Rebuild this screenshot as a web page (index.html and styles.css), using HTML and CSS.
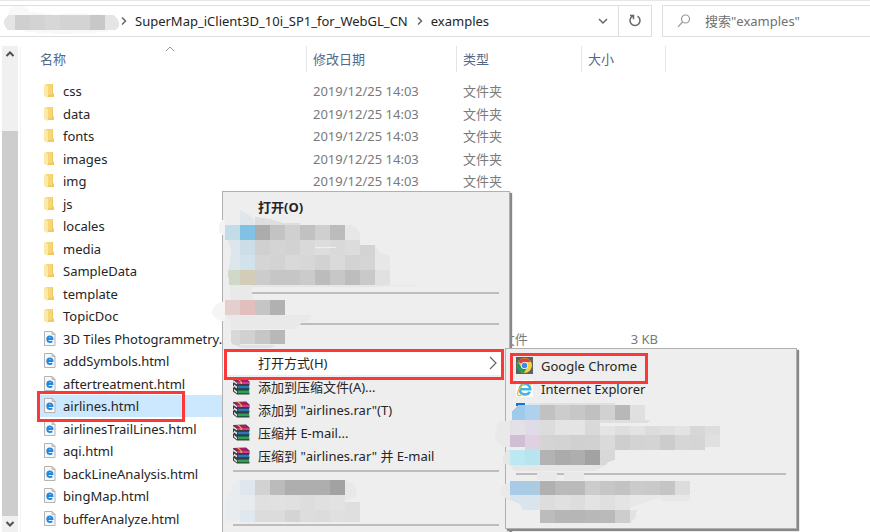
FILE: index.html
```html
<!DOCTYPE html>
<html lang="zh-CN">
<head>
<meta charset="utf-8">
<title>examples</title>
<link rel="stylesheet" href="styles.css">
</head>
<body>
<svg class="defs" aria-hidden="true">
  <defs>
    <symbol id="folder" viewBox="0 0 13 15">
      <path fill="#f0c95f" d="M3 1h7v9l1 1v3H3z"/>
      <path fill="#f6d778" d="M3 1h6v11H3z"/>
      <path fill="#fbe9a9" d="M1 1l4 2v12l-4-2z"/>
    </symbol>
    <symbol id="page" viewBox="0 0 13 15">
      <path fill="#f7f7f7" stroke="#b4b4b4" d="M1.500.5h7.500l3 3v11h-10.500z"/>
      <path fill="#ddd" stroke="#a8a8a8" stroke-width=".7" d="M9 .5v3h3z"/>
      <path fill="none" stroke="#2388e0" stroke-width="1.900" d="M4 8h5.500c0-3.400-5.300-3.400-5.300.3 0 3 3.500 3.200 5 2"/>
    </symbol>
    <symbol id="rar" viewBox="0 0 17 17">
      <path fill="#3a3a3a" d="M0 1l13-.5 3.500 3V7l-.5 1 .5 3-.5 1 .5 4.500H4L0 13.500V10l1-1-1-1.500V5l1-1z"/>
      <path fill="#a81c62" d="M1 1h12l3 3H4z"/>
      <path fill="#d93a8e" d="M4 4h12v2H4.500z"/>
      <path fill="#e8e8e8" d="M1 2.500L4 5v1.500L1 4.500zM1 6.500l3 2v2l-3-2zM1 11l3 2.500v2l-3-2.500z"/>
      <path fill="#1c4f9c" d="M4.500 7.500H16v3H4.500z"/>
      <path fill="#38a4d8" d="M5 8.500h11v1H5z"/>
      <path fill="#137a3c" d="M4.500 12H16v3.500H4.500z"/>
      <path fill="#50c47b" d="M5 13.500h11v1H5z"/>
      <path fill="#d8b637" d="M4 1h2l3 3v2H7.500V4z"/>
    </symbol>
    <symbol id="chrome" viewBox="0 0 17 17">
      <path fill="#5b6165" d="M0 0h17v17H0z"/>
      <circle cx="8.500" cy="8.500" r="7.500" fill="#f9cf3c"/>
      <path fill="#dc4437" d="M8.500 8.500L2 4.800A7.500 7.500 0 0 1 15 5H8.500z"/>
      <path fill="#1d9d58" d="M2 4.800A7.500 7.500 0 0 0 7.800 16L11.500 10.300l-6 .2z"/>
      <circle cx="8.500" cy="8.500" r="3.600" fill="#fff"/>
      <circle cx="8.500" cy="8.500" r="2.800" fill="#4386f5"/>
    </symbol>
    <symbol id="ie" viewBox="0 0 17 17">
      <path fill="#fff" d="M0 0h17v17H0z"/>
      <path fill="none" stroke="#42b4e6" stroke-width="2.600" d="M4.500 9.300h9.700c0-7-10.300-7-10.300.2 0 6 8 6.300 9.700 2.200"/>
      <path fill="none" stroke="#f2bd2c" stroke-width="1.400" d="M14.500 4.800C17 .2 12 1 8 3.800 3 7.500.3 13.500 2.200 15.200c1 .8 2.800 0 4-1"/>
    </symbol>
  </defs>
</svg>

<div class="window">
  <header class="toolbar">
    <div class="address">
      <svg class="mosaic crumb-mosaic" viewBox="0 0 119 30" data-mosaic="crumb"></svg>
      <svg class="chevron" viewBox="0 0 6 8"><path d="M1 0.500l3.500 3.500L1 7.500"/></svg>
      <a href="#">SuperMap_iClient3D_10i_SP1_for_WebGL_CN</a>
      <svg class="chevron" viewBox="0 0 6 8"><path d="M1 0.500l3.500 3.500L1 7.500"/></svg>
      <a href="#">examples</a>
      <button class="history" aria-label="历史"><svg viewBox="0 0 10 7"><path d="M1 1l4 4 4-4"/></svg></button>
      <button class="refresh" aria-label="刷新"><svg viewBox="0 0 14 14"><path d="M9.500 2.200a5 5 0 1 1-5 0M2 1.500h3.500v3.800"/></svg></button>
    </div>
    <label class="search">
      <svg viewBox="0 0 14 14"><circle cx="8.500" cy="5" r="4"/><path d="M5.500 8L1 12.800"/></svg>
      <input type="search" placeholder="搜索&quot;examples&quot;" aria-label="搜索">
    </label>
  </header>

  <main class="content">
    <div class="rail"></div>
    <div class="scrollbar">
      <svg viewBox="0 0 16 16"><path d="M4.500 10L8 6.500l3.500 3.500"/></svg>
      <div class="thumb"></div>
      <svg viewBox="0 0 16 16"><path d="M4.500 6L8 9.500 11.500 6"/></svg>
    </div>
    <section class="pane">
      <table>
        <colgroup><col class="c-name"><col class="c-date"><col class="c-type"><col class="c-size"></colgroup>
        <thead><tr><th>名称<svg class="sort" viewBox="0 0 10 6"><path d="M1 5l4-4 4 4"/></svg></th><th>修改日期</th><th>类型</th><th>大小</th></tr></thead>
        <tbody>
          <tr><td><svg><use href="#folder"/></svg>css</td><td>2019/12/25 14:03</td><td>文件夹</td><td></td></tr>
          <tr><td><svg><use href="#folder"/></svg>data</td><td>2019/12/25 14:03</td><td>文件夹</td><td></td></tr>
          <tr><td><svg><use href="#folder"/></svg>fonts</td><td>2019/12/25 14:03</td><td>文件夹</td><td></td></tr>
          <tr><td><svg><use href="#folder"/></svg>images</td><td>2019/12/25 14:03</td><td>文件夹</td><td></td></tr>
          <tr><td><svg><use href="#folder"/></svg>img</td><td>2019/12/25 14:03</td><td>文件夹</td><td></td></tr>
          <tr><td><svg><use href="#folder"/></svg>js</td><td></td><td></td><td></td></tr>
          <tr><td><svg><use href="#folder"/></svg>locales</td><td></td><td></td><td></td></tr>
          <tr><td><svg><use href="#folder"/></svg>media</td><td></td><td></td><td></td></tr>
          <tr><td><svg><use href="#folder"/></svg>SampleData</td><td></td><td></td><td></td></tr>
          <tr><td><svg><use href="#folder"/></svg>template</td><td></td><td></td><td></td></tr>
          <tr><td><svg><use href="#folder"/></svg>TopicDoc</td><td></td><td></td><td></td></tr>
          <tr><td><svg><use href="#page"/></svg>3D Tiles Photogrammetry.</td><td></td><td>HTML 文件</td><td>3 KB</td></tr>
          <tr><td><svg><use href="#page"/></svg>addSymbols.html</td><td></td><td></td><td></td></tr>
          <tr><td><svg><use href="#page"/></svg>aftertreatment.html</td><td></td><td></td><td></td></tr>
          <tr class="selected"><td><svg><use href="#page"/></svg>airlines.html<span class="mark mark-file"></span></td><td></td><td></td><td></td></tr>
          <tr><td><svg><use href="#page"/></svg>airlinesTrailLines.html</td><td></td><td></td><td></td></tr>
          <tr><td><svg><use href="#page"/></svg>aqi.html</td><td></td><td></td><td></td></tr>
          <tr><td><svg><use href="#page"/></svg>backLineAnalysis.html</td><td></td><td></td><td></td></tr>
          <tr><td><svg><use href="#page"/></svg>bingMap.html</td><td></td><td></td><td></td></tr>
          <tr><td><svg><use href="#page"/></svg>bufferAnalyze.html</td><td></td><td></td><td></td></tr>
        </tbody>
      </table>
    </section>
  </main>

  <div class="menu context">
    <button class="default">打开(O)</button>
    <svg class="mosaic" viewBox="223 222 286 70" height="70" data-mosaic="apps"></svg>
    <hr>
    <svg class="mosaic" viewBox="223 294 286 29" height="29" data-mosaic="single"></svg>
    <hr>
    <svg class="mosaic" viewBox="223 325 286 26" height="26" data-mosaic="short"></svg>
    <button class="open-with">打开方式(H)<svg class="arrow" viewBox="0 0 8 14"><path d="M1 1l6 6-6 6"/></svg><span class="mark mark-open"></span></button>
    <button><svg><use href="#rar"/></svg>添加到压缩文件(A)...</button>
    <button><svg><use href="#rar"/></svg>添加到 "airlines.rar"(T)</button>
    <button><svg><use href="#rar"/></svg>压缩并 E-mail...</button>
    <button><svg><use href="#rar"/></svg>压缩到 "airlines.rar" 并 E-mail</button>
    <hr class="spaced">
    <svg class="mosaic" viewBox="223 472 286 52" height="52" data-mosaic="tail"></svg>
    <hr>
    <div class="menu-end"></div>
  </div>

  <div class="menu submenu">
    <button><svg><use href="#chrome"/></svg>Google Chrome<span class="mark mark-chrome"></span></button>
    <button><svg><use href="#ie"/></svg>Internet Explorer</button>
    <svg class="mosaic" viewBox="506 400 290 73" height="73" data-mosaic="browsers"></svg>
    <hr>
    <svg class="mosaic" viewBox="506 475 290 53" height="53" data-mosaic="more"></svg>
  </div>
</div>
<script src="mosaic.js"></script>
</body>
</html>
```
FILE: styles.css
```css
* { box-sizing: border-box; }

body {
  margin: 0;
  background: #fff;
  color: #252525;
  font: 13px/20px "Noto Sans", "Noto Sans CJK SC", sans-serif;
}

button, input { font: inherit; color: inherit; border: 0; background: none; padding: 0; }
a { color: inherit; text-decoration: none; }
svg { display: block; flex: none; }
.defs { position: absolute; width: 0; height: 0; }

.window {
  position: relative;
  display: flex;
  flex-direction: column;
  height: 100vh;
  overflow: hidden;
  border-top: 1px solid #e6e6e6;
}

.toolbar { display: flex; gap: 10px; padding-top: 4px; }
.address {
  display: flex;
  align-items: center;
  flex: 1;
  height: 32px;
  border: 1px solid #dedede;
  border-left: 0;
}
.crumb-mosaic { width: 119px; height: 30px; }
.chevron { width: 6px; height: 8px; margin: 0 8px 0 2px; }
.address a + .chevron { margin-left: 9px; }
.chevron path, .history path, .refresh path, .scrollbar path, .sort path, .arrow path { fill: none; stroke: #666; stroke-width: 1.5; }
.history { margin-left: auto; width: 30px; height: 30px; display: grid; place-items: center; }
.history svg { width: 10px; height: 7px; }
.refresh { width: 33px; height: 30px; display: grid; place-items: center; border-left: 1px solid #dedede; }
.refresh svg { width: 14px; height: 14px; }
.search {
  display: flex;
  align-items: center;
  gap: 14px;
  flex: 0 0 208px;
  min-width: 0;
  height: 32px;
  padding-left: 14px;
  border: 1px solid #dedede;
  border-right: 0;
}
.search svg { width: 14px; height: 14px; fill: none; stroke: #999; stroke-width: 1.2; }
.search input { flex: 1; min-width: 0; outline: 0; }
.search input::placeholder { color: #707070; opacity: 1; }

.content { flex: 1; display: flex; min-height: 0; padding-top: 9px; }
.rail { width: 2px; }
.scrollbar { width: 16px; background: #f0f0f0; display: flex; flex-direction: column; }
.scrollbar svg { width: 16px; height: 16px; }
.scrollbar path { stroke: #505050; stroke-width: 2; }
.thumb { flex: 1; margin-top: 69px; background: #cdcdcd; }

.pane { flex: 1; min-width: 0; margin-left: 2px; border-left: 1px solid #f2f2f2; padding-left: 19px; }
table { table-layout: fixed; width: 626px; border-collapse: separate; border-spacing: 0; }
.c-name { width: 267px; }
.c-date { width: 150px; }
.c-type { width: 125px; }
.c-size { width: 84px; }
th {
  position: relative;
  height: 26px;
  padding: 0 6px;
  border-right: 1px solid #e5e5e5;
  text-align: left;
  font-weight: 400;
  color: #52698a;
}
th:first-child { padding-left: 0; }
thead::after { content: ""; display: block; height: 8px; }
.sort { position: absolute; left: 125px; top: 0; width: 10px; height: 6px; }
.sort path { stroke: #999; stroke-width: 1; }
td { height: 22px; padding: 0 6px; color: #7a7a7a; white-space: nowrap; line-height: 22px; }
tr:nth-child(even) td { height: 23px; }
td:first-child { position: relative; padding: 0 0 0 3px; color: #252525; }
td:last-child { text-align: right; padding-right: 8px; }
td svg { display: inline-block; width: 13px; height: 15px; margin-right: 7px; vertical-align: -2px; }
.selected td { background: #cce8ff; }

.menu {
  position: absolute;
  display: flex;
  flex-direction: column;
  background: #eee;
  border: 1px solid #b0b0b0;
  box-shadow: 2px 2px 1px #888;
}
.context { left: 222px; top: 190px; width: 288px; }
.submenu { left: 505px; top: 347px; width: 292px; padding-top: 5px; }
.menu button {
  position: relative;
  display: flex;
  align-items: center;
  gap: 8px;
  height: 23px;
  padding: 0 10px;
  text-align: left;
}
.menu button svg { width: 17px; height: 17px; }
.menu .default { height: 30px; padding-left: 35px; font-weight: 700; }
.menu .open-with { height: 24px; padding-left: 35px; margin: 0 8px 0 0; background: #fff; }
.menu .open-with .arrow { width: 8px; height: 14px; margin-left: auto; margin-right: -6px; }
.arrow path { stroke-width: 1.2; }
.menu hr { height: 2px; margin: 0 10px; border: 0; background: #bdbdbd; }
.menu .spaced { margin-top: 3px; }
.menu-end { height: 20px; }
.mosaic { position: relative; overflow: visible; }
.menu .mosaic { width: 100%; }

.mark { position: absolute; z-index: 2; border: 3px solid #fb3838; }
.mark-file { left: -3px; top: -4px; width: 148px; height: 31px; }
.mark-open { left: 1px; top: -2px; width: 280px; height: 31px; }
.mark-chrome { left: 4px; top: -1px; width: 138px; height: 31px; }
```
FILE: mosaic.js
```js
// Each row: [x, y, height, colours]; tiles are 15px wide. Blobs are smudges drawn below the tiles.
const MOSAICS = {
  crumb: {
    blobs: [['#f8f8f8', 'M8 10Q8 0 18 0Q27 0 30 6L58 9Q64 6 80 7L108 9V26L60 28L26 26Z'],
            ['#e5e5e5', 'M15 9H8Q0 17 8 24H15Z'], ['#e5e5e5', 'M104 9H113Q124 17 116 24H104Z']],
    rows: [[15, 9, 15, 'cfcfcf d3d3d3 d7d7d7 d3d3d3 d3d3d3 c8c8c8']]
  },
  apps: {
    blobs: [['#f3f3f3', 'M225 219Q219 221 219 228Q219 235 225 236Z'],
            ['#dfe7ea', 'M240 210Q247 213 253 218L255 225H240Z'],
            ['#dedede', 'M255 217L270 219L284 223H300V225H255Z'],
            ['#e7e7e7', 'M345 225H351Q360 228 360 236L359 244H345Z'],
            ['#e7e7e7', 'M375 246L380 253L390 256V270H375ZM240 285H415L416 286L350 287H240Z'],
            ['#e9e9e9', 'M230 285H252L251 294L253 300H230Z']],
    rows: [[225, 225, 15, 'c3dce9 81c1e3 acacac c3c3c3 d0d0d0 c1c1c1 cfcfcf bcbcbc'],
           [240, 240, 15, 'ccdde8 d0d0d0 d4d4d4 d2d2d2 d9d9d9 dddddd d9d9d9 dcdcdc'],
           [360, 245, 10, 'd3d3d3'],
           [240, 255, 15, 'd2e2ea d5d5d5 d3d3d3 d9d9d9 d7d7d7 d2d2d2 dadada d3d3d3 d5d5d5'],
           [240, 270, 15, 'd3ccb8 cccccc c6c6c6 c6c6c6 cbcbcb bcbcbc c7c7c7 bdbdbd c9c9c9 e1e1e1']],
    over: [['#dce6ec', 'M228 240H240V270H229L231 250Z'], ['#d0d8c8', 'M228 270H240V285H229Z'],
           ['#efefef', 'M314 247L336 247V248H319V249Z']]
  },
  single: {
    blobs: [['#f5f5f5', 'M225 301Q212 304 212 312Q213 320 225 321Z'],
            ['#e9e9e9', 'M231 291H252L253 300H231ZM225 315H313L309 321L301 323L296 329H231V321Z']],
    rows: [[225, 300, 15, 'e5cece e1bfbf c5c5c5 b1b1b1']]
  },
  short: {
    blobs: [['#e9e9e9', 'M231 323H300L296 329H231Z'], ['#d8d8d8', 'M231 330H240V345H234Q231 344 231 340Z']],
    rows: [[240, 330, 14, 'd1d1d1 c6c6c6 b8b8b8']],
    over: [['#e1e1e1', 'M235 345H276L270 348H242Z']]
  },
  tail: {
    blobs: [['#e8ecee', 'M240 479Q231 483 232 490L225 501V521H240Z'],
            ['#e8e8e8', 'M345 480Q358 485 357 493Q355 500 345 500Z']],
    rows: [[240, 480, 15, 'dfe6ee d2d2d2 bbbbbb aeaeae aeaeae aeaeae a2a2a2'],
           [240, 495, 15, 'e7ebee e0e0e0 e1e1e1 e0e0e0 dddddd e0e0e0 e2e2e2'],
           [345, 502, 8, 'dfdfdf'],
           [240, 510, 12, 'dfe8ef dcdcdc dcdcdc d4d4d4 dddddd dcdcdc e0e0e0 dfdfdf']]
  },
  browsers: {
    blobs: [['#1376d3', 'M516 403H525V406H516Z'],
            ['#e9e9e9', 'M498 421H510V447H503Q495 443 495 434Z'],
            ['#e6e6e6', 'M510 450Q503 450 503 459Q503 465 510 465L514 471H595L607 465L600 460H510Z'],
            ['#dfdfdf', 'M540 403H615V405H540ZM600 420H651L647 423H600Z'],
            ['#9ecaec', 'M518 405H525V420H512V412Z'],
            ['#dbe5ee', 'M525 405L530 403H540V405Z'],
            ['#d8d8d8', 'M600 450H615V460L608 462L606 465H600Z']],
    rows: [[525, 405, 15, 'aed1ee c1c1c1 cccccc c7c7c7 c0c0c0 d1d1d1 b8b8b8 e0e0e0'],
           [510, 420, 15, 'e3e0e8 e0dbe8 dcdcdc e4e4e4 e4e4e4 d9d9d9'],
           [600, 426, 9, 'e4e4e4 dedede e3e3e3 dcdcdc dfdfdf e3e3e3 d7d7d7 dddddd'],
           [510, 435, 12, 'cfbfd3'], [705, 435, 12, 'e0e0e0'],
           [525, 435, 15, 'dfd1e0 d4d4d4 d3d3d3 d0d0d0 d1d1d1 dadada cecece d3d3d3 d4d4d4 cccccc d6d6d6 d5d5d5'],
           [510, 450, 15, 'bbe8f3 b8e4ef b3b3b3 ababab aeaeae a2a2a2']]
  },
  more: {
    blobs: [['#e9e9e9', 'M510 483Q500 485 500 491Q501 498 510 500ZM537 472H557V480H537ZM564 472H584V480H564Z'],
            ['#d9e4ec', 'M510 495H540V510H523L520 504L510 500Z'],
            ['#e8e8e8', 'M630 495H690V501H661V497L630 508Z'],
            ['#e2e2e2', 'M630 510H637L635 519L630 523Z']],
    rows: [[510, 481, 14, 'a8cce8 abcce0 b0b0b0 bababa bababa cccccc c6c6c6 c3c3c3 cbcbcb c9c9c9 c5c5c5 dddddd'],
           [540, 495, 15, 'dddddd e0e0e0 dddddd e3e3e3 dfdfdf e4e4e4'],
           [540, 510, 13, 'bcbcbc b6b6b6 b6b6b6 b8b8b8 bababa cdcdcd']]
  }
};

const paths = (list = []) => list.map(([fill, d]) => `<path fill="${fill}" d="${d}"/>`).join('');
const tiles = (rows) => rows.map(([x, y, h, colours]) => colours.split(' ').map((c, i) =>
  `<rect x="${x + i * 15}" y="${y}" width="15" height="${h}" fill="#${c}"/>`).join('')).join('');

document.querySelectorAll('[data-mosaic]').forEach((svg) => {
  const m = MOSAICS[svg.dataset.mosaic];
  svg.innerHTML = `<g shape-rendering="crispEdges">${paths(m.blobs)}${tiles(m.rows)}${paths(m.over)}</g>`;
});
```
